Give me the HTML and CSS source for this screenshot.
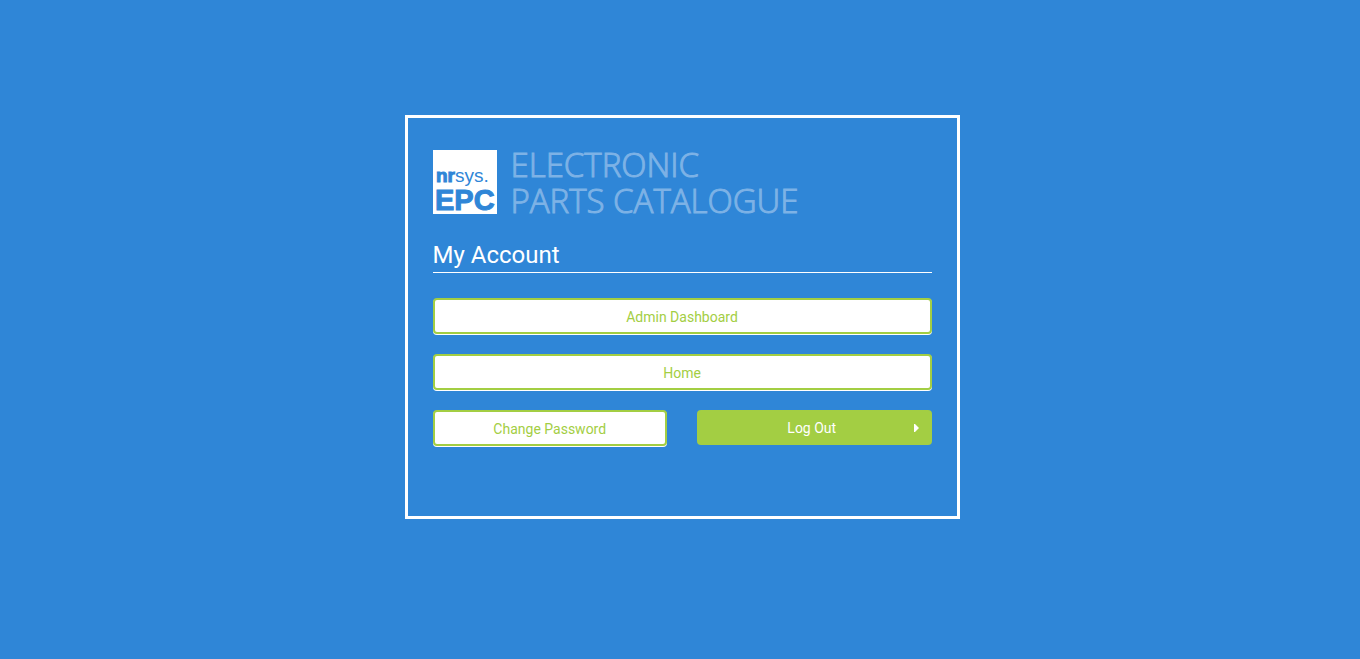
FILE: index.html
```html
<!DOCTYPE html>
<html lang="en">
<head>
<meta charset="utf-8">
<meta name="viewport" content="width=device-width, initial-scale=1">
<title>My Account</title>
<link rel="stylesheet" href="styles.css">
</head>
<body>
<main class="card">
  <header class="brand">
    <svg class="brand-mark" viewBox="0 0 64 64">
      <rect width="64" height="64" fill="#fff"/>
      <text class="mark-bold mark-heavy" x="3" y="32" font-size="19">nr</text>
      <text class="mark-regular" x="22" y="32" font-size="19">sys.</text>
      <text class="mark-bold mark-heavy" x="2" y="60" font-size="29">EPC</text>
    </svg>
    <div class="brand-name">Electronic<br>Parts Catalogue</div>
  </header>
  <h1 class="title">My Account</h1>
  <nav class="actions">
    <button class="btn btn-outline btn-wide" type="button">Admin Dashboard</button>
    <button class="btn btn-outline btn-wide" type="button">Home</button>
    <button class="btn btn-outline" type="button">Change Password</button>
    <button class="btn btn-solid" type="button">
      <span class="btn-label">Log Out</span>
      <svg class="caret" viewBox="0 0 5 8"><path d="M0 0H1L5 4L1 8H0Z" fill="#fff"/></svg>
    </button>
  </nav>
</main>
</body>
</html>
```
FILE: styles.css
```css
* { box-sizing: border-box; }
body {
  margin: 0;
  padding: 115px 0 40px 4px;
  min-height: 100vh;
  background: #2f86d7;
  color: #fff;
  font-family: Roboto, sans-serif;
}
.card {
  max-width: 555px;
  margin: 0 auto;
  padding: 32px 25px 70px;
  border: 3px solid #fff;
}
.brand { display: flex; gap: 14px; }
.brand-mark { flex: none; width: 64px; height: 64px; }
.mark-bold, .mark-regular {
  fill: #2f86d7;
  font-family: "Liberation Sans", Arial, sans-serif;
}
.mark-bold { font-weight: 700; }
.mark-heavy { stroke: #2f86d7; stroke-width: 1px; }
.brand-name {
  color: #7db2e6;
  font-family: "Open Sans", sans-serif;
  font-weight: 300;
  font-size: 33px;
  line-height: 36px;
  margin-top: -3px;
  text-transform: uppercase;
  white-space: nowrap;
  -webkit-text-stroke: 1px #7db2e6;
}
.title {
  margin: 20px 0 25px;
  padding-bottom: 1px;
  border-bottom: 1px solid #fff;
  font-size: 24px;
  font-weight: 400;
  line-height: 32px;
}
.actions {
  display: grid;
  grid-template-columns: 1fr 1fr;
  gap: 20px 30px;
  align-items: start;
}
.btn {
  height: 35px;
  padding: 0 13px;
  border: 0;
  border-radius: 4px;
  font: 14px/20px Roboto, sans-serif;
  cursor: pointer;
}
.btn-wide { grid-column: 1 / -1; }
.btn-outline {
  height: 36px;
  padding-top: 2px;
  border: 2px solid #a3ce43;
  background: #fff;
  color: #a3ce43;
  box-shadow: 0 1px 0 #fff;
}
.btn-solid {
  display: flex;
  align-items: center;
  background: #a3ce43;
  color: #fff;
}
.btn-label { flex: 1; }
.caret { width: 5px; height: 8px; }
```
